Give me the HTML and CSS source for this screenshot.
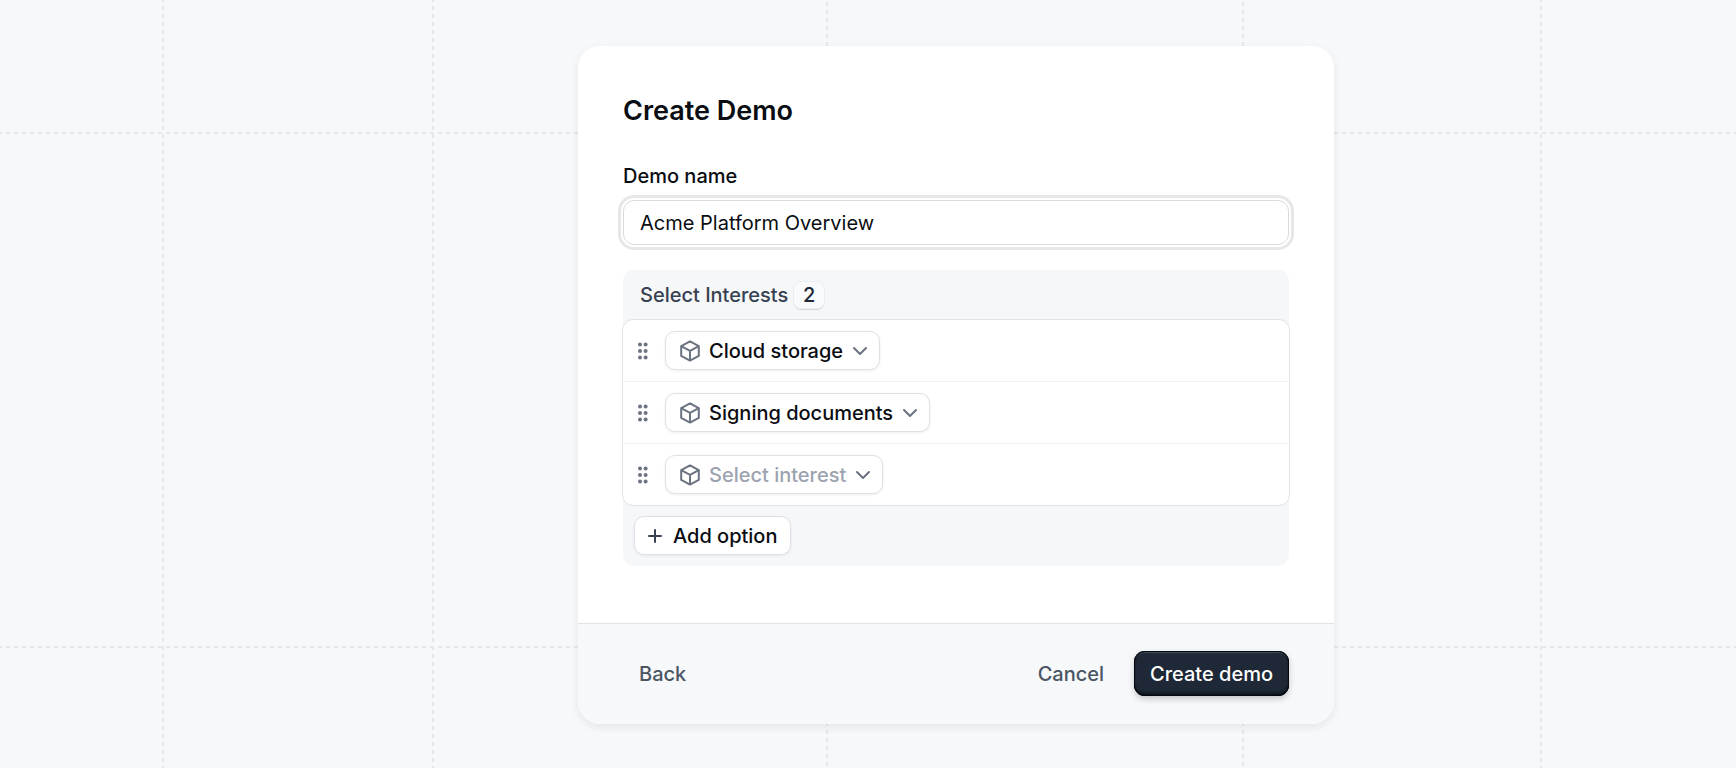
FILE: index.html
```
<!DOCTYPE html>
<html lang="en">
<head>
    <meta charset="UTF-8">
    <meta name="viewport" content="width=device-width, initial-scale=1.0">
    <title>Create Demo</title>
    <link rel="stylesheet" href="styles.css">
</head>
<body>
    <!-- Shared icons -->
    <svg class="sprite" aria-hidden="true">
        <symbol id="icon-grip" viewBox="0 0 12 18">
            <circle cx="3" cy="2.5" r="2"/><circle cx="8.6" cy="2.5" r="2"/>
            <circle cx="3" cy="9" r="2"/><circle cx="8.6" cy="9" r="2"/>
            <circle cx="3" cy="15.5" r="2"/><circle cx="8.6" cy="15.5" r="2"/>
        </symbol>
        <symbol id="icon-cube" viewBox="0 0 20 22">
            <path d="M10 1.4 18.8 6.1V15.9L10 20.6 1.2 15.9V6.1ZM1.2 6.1 10 10.8 18.8 6.1M10 10.8V20.6"/>
        </symbol>
        <symbol id="icon-chevron" viewBox="0 0 16 10">
            <path d="M2 2 8 8 14 2"/>
        </symbol>
        <symbol id="icon-plus" viewBox="0 0 14 14">
            <path d="M7 1V13M1 7H13"/>
        </symbol>
    </svg>

    <main class="page">
        <form class="card">
            <div class="card-body">
                <h1>Create Demo</h1>
                <label class="label" for="demo-name">Demo name</label>
                <input class="input" id="demo-name" type="text" value="Acme Platform Overview">

                <section class="interests">
                    <div class="interests-header">
                        <h2>Select Interests</h2>
                        <span class="count">2</span>
                    </div>
                    <ul class="interests-list">
                        <li>
                            <svg class="grip"><use href="#icon-grip"/></svg>
                            <button type="button" class="pill" aria-haspopup="listbox">
                                <svg class="cube"><use href="#icon-cube"/></svg>
                                <span>Cloud storage</span>
                                <svg class="chevron"><use href="#icon-chevron"/></svg>
                            </button>
                        </li>
                        <li>
                            <svg class="grip"><use href="#icon-grip"/></svg>
                            <button type="button" class="pill" aria-haspopup="listbox">
                                <svg class="cube"><use href="#icon-cube"/></svg>
                                <span>Signing documents</span>
                                <svg class="chevron"><use href="#icon-chevron"/></svg>
                            </button>
                        </li>
                        <li>
                            <svg class="grip"><use href="#icon-grip"/></svg>
                            <button type="button" class="pill empty" aria-haspopup="listbox">
                                <svg class="cube"><use href="#icon-cube"/></svg>
                                <span>Select interest</span>
                                <svg class="chevron"><use href="#icon-chevron"/></svg>
                            </button>
                        </li>
                    </ul>
                    <div class="interests-footer">
                        <button type="button" class="pill add">
                            <svg class="plus"><use href="#icon-plus"/></svg>
                            <span>Add option</span>
                        </button>
                    </div>
                </section>
            </div>

            <footer class="card-footer">
                <button type="button" class="btn">Back</button>
                <div class="actions">
                    <button type="button" class="btn">Cancel</button>
                    <button type="submit" class="btn primary">Create demo</button>
                </div>
            </footer>
        </form>
    </main>
</body>
</html>
```

FILE: styles.css
```
* {
    margin: 0;
    padding: 0;
    box-sizing: border-box;
}

body {
    --dash-y: linear-gradient(#e6e7e9 50%, transparent 50%);
    --dash-x: linear-gradient(90deg, #e6e7e9 50%, transparent 50%);
    min-height: 100vh;
    font-family: 'Inter', sans-serif;
    font-size: 20px;
    line-height: 24px;
    color: #0a0d12;
    /* dashed guide lines behind the card */
    background:
        var(--dash-y) 162px 6px / 2px 8px repeat-y,
        var(--dash-y) 432px 6px / 2px 8px repeat-y,
        var(--dash-y) 826px 2px / 2px 8px repeat-y,
        var(--dash-y) 1242px 2px / 2px 8px repeat-y,
        var(--dash-y) 1540px 6px / 2px 8px repeat-y,
        var(--dash-x) 6px 132px / 8px 2px repeat-x,
        var(--dash-x) 6px 646px / 8px 2px repeat-x,
        #f7f8fa;
}

button,
input {
    font: inherit;
    color: inherit;
}

button {
    cursor: pointer;
}

svg {
    flex-shrink: 0;
    fill: none;
    stroke: #6b7280;
    stroke-width: 2;
    stroke-linecap: round;
    stroke-linejoin: round;
}

.sprite {
    position: absolute;
    width: 0;
    height: 0;
}

.page {
    display: flex;
    justify-content: center;
    padding: 46px 0 44px 176px;
}

.card {
    width: 100%;
    max-width: 756px;
    background: #fff;
    border-radius: 22px;
    overflow: hidden;
    box-shadow: 0 4px 8px rgba(0, 0, 0, 0.06), 0 1px 16px rgba(0, 0, 0, 0.02);
}

.card-body {
    padding: 49px 45px 57px;
}

h1 {
    font-size: 27px;
    line-height: 32px;
    font-weight: 600;
    margin-bottom: 37px;
}

.label {
    display: block;
    font-weight: 500;
    margin-bottom: 12px;
}

.input {
    display: block;
    width: 100%;
    height: 45px;
    padding: 0 16px;
    background: #fff;
    border: 1px solid #d9dbe1;
    border-radius: 11px;
    outline: none;
    box-shadow: 0 0 0 2px #fff, 0 0 0 5px #e7e7e8;
}

.interests {
    margin-top: 25px;
    background: #f6f7f9;
    border-radius: 11px;
}

.interests-header {
    display: flex;
    align-items: center;
    gap: 6px;
    height: 49px;
    padding: 0 17px;
}

h2 {
    font-size: 20px;
    font-weight: 500;
    color: #374151;
}

.count {
    width: 30px;
    line-height: 26px;
    text-align: center;
    font-weight: 500;
    color: #1f2937;
    background: #f9fafb;
    border-radius: 7px;
    box-shadow: 0 0 0 1px #eceef0, 0 2px 1px #d5d7da;
}

.interests-list {
    list-style: none;
    margin: 0 -1px;
    background: #fff;
    border: 1px solid #e1e3e8;
    border-radius: 11px;
}

.interests-list li {
    display: flex;
    align-items: center;
    gap: 16px;
    padding: 11px 14px;
}

.interests-list li + li {
    border-top: 1px solid #f0f1f3;
}

.grip {
    width: 12px;
    height: 18px;
    fill: #6b7280;
    stroke: none;
}

.cube {
    width: 20px;
    height: 22px;
}

.chevron {
    width: 16px;
    height: 10px;
}

.pill {
    display: flex;
    align-items: center;
    gap: 9px;
    height: 39px;
    padding: 0 11px 0 14px;
    font-weight: 500;
    color: #0a0d12;
    background: #fff;
    border: 1px solid #dfe1e7;
    border-radius: 10px;
    box-shadow: 0 1px 3px rgba(16, 24, 40, 0.08);
}

.pill.empty span {
    color: #9ca3af;
}

.interests-footer {
    padding: 10px 11px 11px;
}

.add {
    gap: 11px;
    padding: 0 13px;
}

.plus {
    width: 14px;
    height: 14px;
    stroke: #374151;
}

.card-footer {
    display: flex;
    justify-content: space-between;
    align-items: center;
    padding: 27px 45px 28px;
    background: #f7f8fa;
    border-top: 1px solid #e1e3e6;
}

.actions {
    display: flex;
    gap: 14px;
}

.btn {
    height: 45px;
    padding: 0 16px;
    font-weight: 500;
    color: #4b5563;
    background: none;
    border: none;
    border-radius: 11px;
}

.primary {
    color: #fff;
    background: #1e2836;
    box-shadow: inset 0 0 0 1px #05080d, inset 0 2px 1px #434c59, inset 0 -3px 3px #0d131c, 0 3px 6px rgba(0, 0, 0, 0.2);
}
```
